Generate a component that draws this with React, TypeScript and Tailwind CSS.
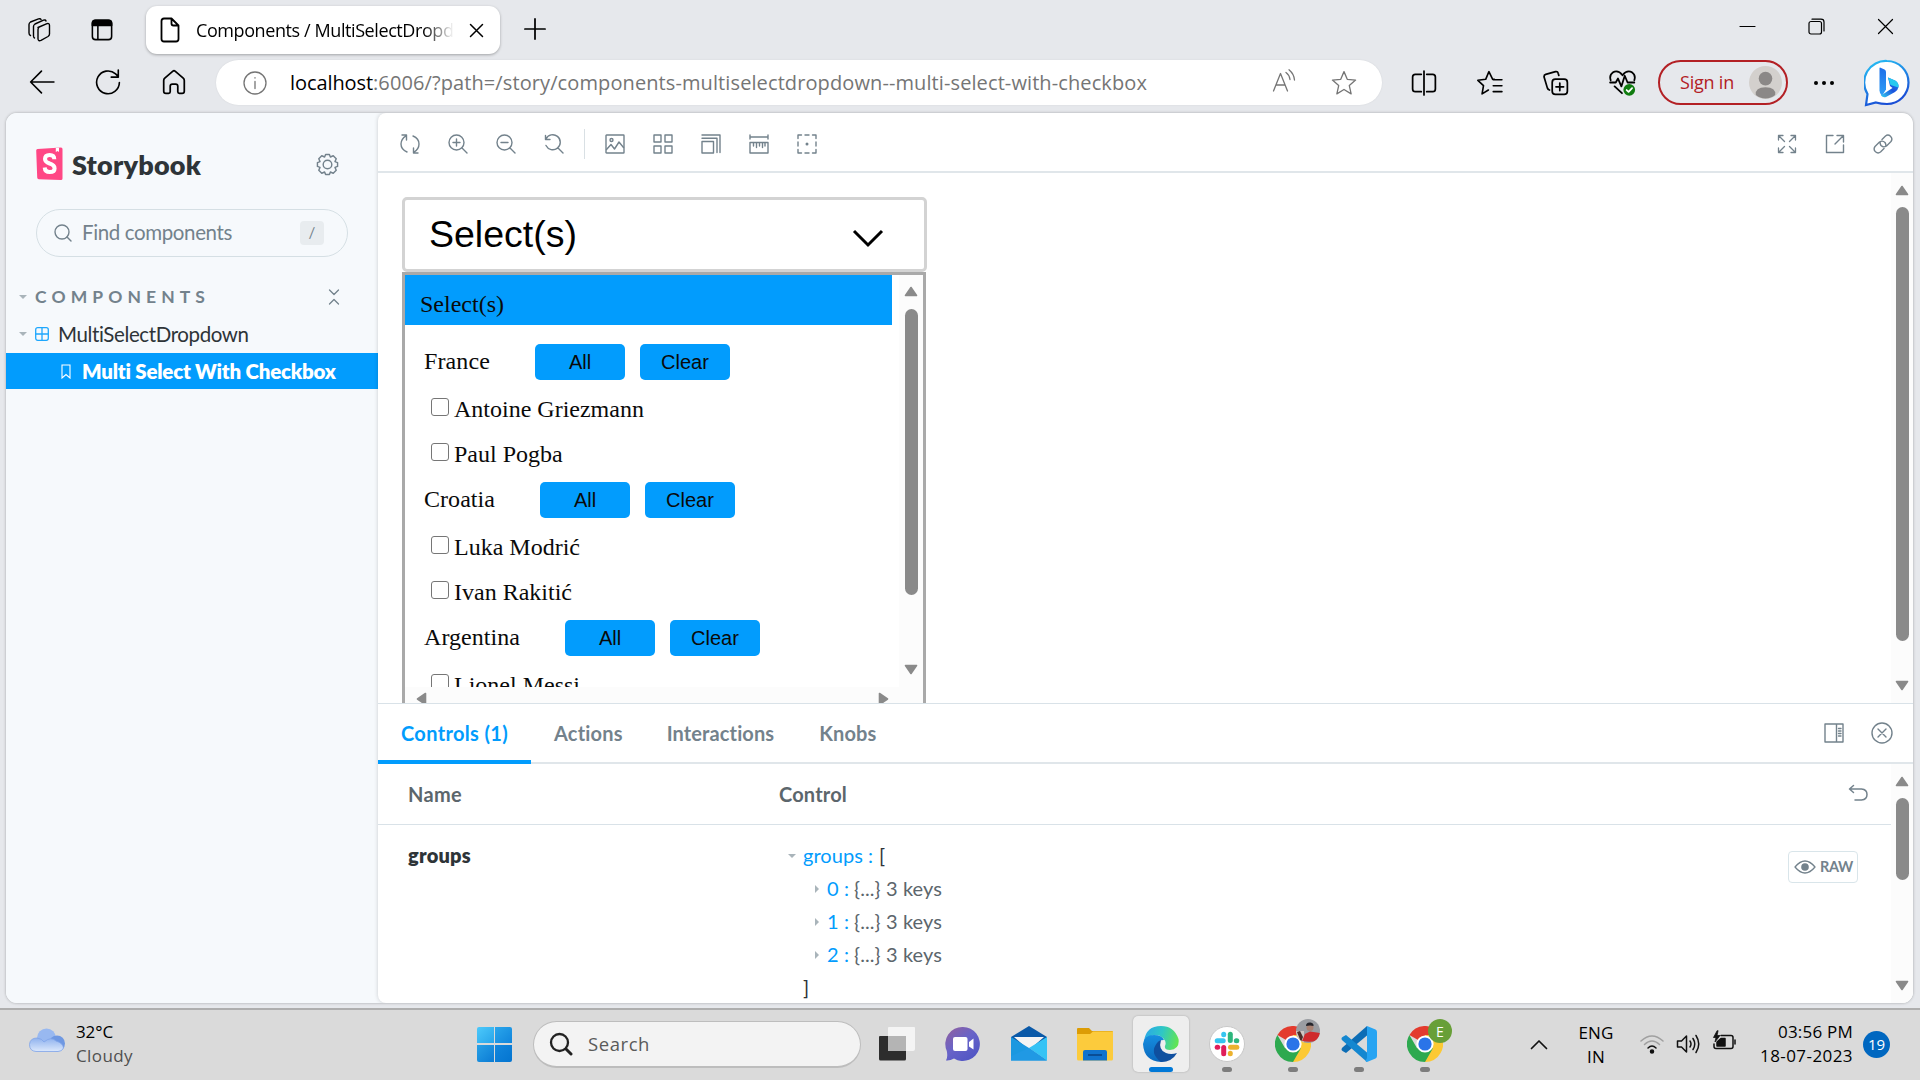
import React, { useLayoutEffect, useRef, useState } from "react";

/* Text run whose tracking is derived from its measured width. */
function T({ w, className = "", children }: { w?: number; className?: string; children: string }) {
  const ref = useRef<HTMLSpanElement>(null);
  const [spacing, setSpacing] = useState(0);
  useLayoutEffect(() => {
    if (ref.current && w) {
      const natural = ref.current.getBoundingClientRect().width;
      setSpacing((w - natural) / children.length);
    }
  }, []);
  return (
    <span ref={ref} style={{ letterSpacing: spacing }} className={`inline-block shrink-0 whitespace-pre ${className}`}>
      {children}
    </span>
  );
}

type IconProps = { className?: string; box?: string; sw?: number; children: React.ReactNode };
function Icon({ className = "size-6", box = "0 0 24 24", sw = 1.5, children }: IconProps) {
  return (
    <svg viewBox={box} className={`block shrink-0 ${className}`} fill="none" stroke="currentColor" strokeWidth={sw} strokeLinecap="round" strokeLinejoin="round">
      {children}
    </svg>
  );
}

function Arrow({ dir }: { dir: "up" | "down" | "left" | "right" }) {
  const d = {
    up: "M7 1.5L12.5 9.5H1.5Z",
    down: "M7 9.5L12.5 1.5H1.5Z",
    left: "M1.5 7L9.5 1.5V12.5Z",
    right: "M9.5 7L1.5 1.5V12.5Z",
  }[dir];
  const vertical = dir === "up" || dir === "down";
  return (
    <svg viewBox={vertical ? "0 0 14 11" : "0 0 11 14"} className={vertical ? "block h-[11px] w-[14px] shrink-0" : "block h-[14px] w-[11px] shrink-0"}>
      <path d={d} fill="#8a8a8a" stroke="#8a8a8a" strokeWidth="1.6" strokeLinejoin="round" />
    </svg>
  );
}

/* ---------- Browser chrome ---------- */

function TabStrip() {
  return (
    <div className="flex h-[60px] items-start">
      <div className="flex h-[60px] w-[146px] items-center pl-[27px]">
        <Icon className="h-6 w-[25px]" sw={1.4}>
          <path d="M10.500 9.500L19.500 5.700Q22 5 22 7.500V16Q22 17.500 20.500 18.500L13.500 22.300Q10.800 23.500 10.500 21V11.500Q10.500 10 12 9Z" />
          <path d="M7 20Q6 19.500 6 18V8.500Q6 7 7.500 6L16 2.200Q18 1.400 18.500 3" />
          <path d="M3 17.500Q1.500 17 1.500 15V6.500Q1.500 5 3 4L11 .9Q13 .3 13.500 1.600" />
        </Icon>
        <Icon className="ml-[39px] size-[22px]" sw={1.7}>
          <rect x="1.500" y="1.500" width="21" height="21" rx="3.500" />
          <path d="M1.500 7V5Q1.500 1.500 5 1.500H19Q22.500 1.500 22.500 5V7Z" fill="currentColor" />
          <path d="M7.500 7V22" />
        </Icon>
      </div>
      <div className="mt-1.5 flex h-12 w-[354px] items-center rounded-[11px] bg-white pl-[14px] shadow-[0_1px_3px_rgba(0,0,0,0.3)]">
        <Icon className="h-[26px] w-5" box="0 0 20 26" sw={1.8}>
          <path d="M4 1.500H11.500L18.500 8.500V22Q18.500 24.500 16 24.500H4Q1.500 24.500 1.500 22V4Q1.500 1.500 4 1.500ZM11.500 1.500V6.500Q11.500 8.500 13.500 8.500H18.500" />
        </Icon>
        <div className="ml-4 w-[258px] overflow-hidden pb-px text-[18px] leading-6 [mask-image:linear-gradient(90deg,#000_88%,transparent)]">
          <T w={268}>Components / MultiSelectDropdo</T>
        </div>
        <Icon className="ml-[15px] size-[15px]" box="0 0 15 15">
          <path d="M1.500 1.500L13.500 13.500M13.500 1.500L1.500 13.500" />
        </Icon>
      </div>
      <div className="flex h-[58px] flex-1 items-center pl-6">
        <Icon className="size-[22px]" sw={1.9}>
          <path d="M12 1V23M1 12H23" />
        </Icon>
      </div>
      <div className="flex h-[52px] items-center pr-[26px]">
        <Icon className="size-[17px]" box="0 0 17 17" sw={1.2}><path d="M1 8.500H16" /></Icon>
        <Icon className="ml-[52px] size-[17px]" box="0 0 17 17" sw={1.2}>
          <rect x="1" y="3.500" width="12.500" height="12.500" rx="2" />
          <path d="M4 1.200H13Q16 1.200 16 4V13" />
        </Icon>
        <Icon className="ml-[52px] size-[17px]" box="0 0 17 17" sw={1.2}><path d="M1.500 1.500L15.500 15.500M15.500 1.500L1.500 15.500" /></Icon>
      </div>
    </div>
  );
}

function BingLogo() {
  return (
    <svg viewBox="0 0 46 48" className="ml-[29px] block h-12 w-[46px] shrink-0">
      <defs>
        <linearGradient id="bubble" x1="0" y1="0" x2=".4" y2="1">
          <stop offset="0" stopColor="#27c4f5" /><stop offset="1" stopColor="#1a4fd6" />
        </linearGradient>
        <linearGradient id="stem" x1="0" y1="0" x2="0" y2="1">
          <stop offset="0" stopColor="#1f6fe8" /><stop offset="1" stopColor="#2fa0f7" />
        </linearGradient>
        <linearGradient id="bowl" x1="1" y1="0" x2="0" y2="1">
          <stop offset="0" stopColor="#1a86ee" /><stop offset=".5" stopColor="#1a53dd" /><stop offset="1" stopColor="#35d0f0" />
        </linearGradient>
      </defs>
      <path d="M23 2A21.500 21.500 0 1 1 23 45Q17 45 12 43.500L2 46L3.500 35A21.500 21.500 0 0 1 23 2Z" fill="#fff" stroke="url(#bubble)" strokeWidth="2.200" />
      <path d="M16 8.500L20.500 10.500Q22 11.300 22 13V30.500L18 37Q15.500 34.500 15.500 31.500V9Z" fill="url(#stem)" />
      <path d="M24 18.500L31 21.500Q35 23.500 34.500 28Q34 31 31 33L22 38Q19 39 17 36.500L28.500 29L26 27Z" fill="url(#bowl)" />
      <path d="M24 18.500L31 21.500Q35 23.500 34.500 28.500L26.500 26Z" fill="#27c9ef" />
    </svg>
  );
}

function AddressRow() {
  return (
    <div className="flex h-[53px] items-start">
      <div className="flex h-[44px] w-[216px] items-center pl-[29px]">
        <Icon className="size-[26px]" sw={1.5}><path d="M23 12H1.500M11.500 2L1.500 12L11.500 22" /></Icon>
        <Icon className="ml-10 size-[26px]" sw={1.5}><path d="M22.500 12.500A10.500 10.500 0 1 1 19 4.500L21.500 7M21.500 1V7.500H15" /></Icon>
        <Icon className="ml-10 size-[26px]" sw={1.6}><path d="M2.500 10.500Q2.500 9.500 3.500 8.500L11 2Q12 1.200 13 2L20.500 8.500Q21.500 9.500 21.500 10.500V20.500Q21.500 22.500 19.500 22.500H17Q15.500 22.500 15.500 21V16Q15.500 14 13.500 14H10.500Q8.500 14 8.500 16V21Q8.500 22.500 7 22.500H4.500Q2.500 22.500 2.500 20.500Z" /></Icon>
      </div>
      <div className="flex h-[45px] w-[1166px] items-center rounded-full bg-white pl-[27px] text-[#757575] shadow-[0_0_2px_rgba(0,0,0,0.08)]">
        <Icon className="size-6" sw={1.3}><circle cx="12" cy="12" r="11" /><path d="M12 10.500V17.500M12 6.700V7" /></Icon>
        <div className="ml-[23px] flex flex-1 text-[20px] leading-7">
          <T w={83} className="text-black">localhost</T>
          <T w={774}>:6006/?path=/story/components-multiselectdropdown--multi-select-with-checkbox</T>
        </div>
        <Icon className="-mt-1 size-6" sw={1.3}><path d="M1.500 22L8.500 4.500L15.500 22M4 16H13M14 3.500Q17.500 6 18 10.500M17 .8Q22 5 22.500 11" /></Icon>
        <Icon className="mr-[25px] ml-[35px] size-[26px]" sw={1.2}><path d="M12 1.500L15 8.600L22.700 9.300L16.900 14.400L18.600 22L12 18L5.400 22L7.100 14.400L1.300 9.300L9 8.600Z" /></Icon>
      </div>
      <div className="flex h-[45px] items-center pl-[29px]">
        <Icon className="size-[26px]" sw={1.6}><path d="M9.500 4H4Q1.500 4 1.500 6.500V17.500Q1.500 20 4 20H9.500M14.500 4H20Q22.500 4 22.500 6.500V17.500Q22.500 20 20 20H14.500M12 1V23" /></Icon>
        <Icon className="ml-10 size-[26px]" sw={1.5}><path d="M16 8.700H14.500L11 1.500L8 8.600L.8 9.500L6 14.500L4.700 22L10.500 18.500M15 9H23M15 14.500H23M15 20H23" /></Icon>
        <Icon className="ml-10 size-[26px]" sw={1.6}>
          <rect x="8.500" y="8.500" width="14" height="14" rx="3" />
          <path d="M15.500 12V19M12 15.500H19M6 18.500Q4.500 18 4 16.500L1 6.500Q.7 4.500 2.500 4L11.500 1.500Q13.500 1 14 3L14.600 5" />
        </Icon>
        <Icon className="ml-10 size-[27px]" sw={1.6}>
          <path d="M1.500 10Q0 5.500 3.500 3Q8 .5 12 5.500Q16 .5 20.500 3Q24 5.500 22.500 10M1 12H6L8 8.500L11 15.500L14 6L16.500 12H22.500M5 15.500L11.500 21.500" />
          <circle cx="18" cy="18.500" r="5.200" fill="#107c10" stroke="none" />
          <path d="M15.700 18.700L17.400 20.300L20.500 17" stroke="#fff" />
        </Icon>
        <div className="ml-[22px] flex h-[45px] w-[130px] items-center justify-between rounded-full border-2 border-[#b32025] pr-[4px] pl-5 text-[18px] text-[#b32025]">
          <T w={54}>Sign in</T>
          <svg viewBox="0 0 34 34" className="block size-[33px]">
            <circle cx="17" cy="17" r="17" fill="#d3d0cd" />
            <circle cx="17" cy="13" r="7" fill="#8b8887" />
            <path d="M7 30Q6 22 17 22Q28 22 27 30Q23 33.500 17 33.500Q11 33.500 7 30Z" fill="#8b8887" />
          </svg>
        </div>
        <svg viewBox="0 0 22 6" className="ml-[25px] block h-1.5 w-[22px]"><circle cx="3" cy="3" r="2" /><circle cx="11" cy="3" r="2" /><circle cx="19" cy="3" r="2" /></svg>
        <BingLogo />
      </div>
    </div>
  );
}

/* ---------- Storybook sidebar ---------- */

function Caret({ className = "" }: { className?: string }) {
  return <svg viewBox="0 0 8 4" className={`block h-1 w-2 shrink-0 ${className}`}><path d="M0 0H8L4 4Z" fill="#a9b4ba" /></svg>;
}

function Sidebar() {
  return (
    <aside className="flex w-[372px] shrink-0 flex-col bg-[#f6f9fc] text-[#2e3438]">
      <div className="mt-[30px] flex h-[42px] items-center pl-[30px]">
        <svg viewBox="0 0 27 34" className="block h-[34px] w-[27px] shrink-0">
          <path d="M1.500 2L25 .500Q26.500 .5 26.500 2V31.500Q26.500 33.200 24.800 33.100L2.800 32.200Q1.300 32 1.200 30.500L.2 3.500Q.2 2.200 1.500 2Z" fill="#ff4785" />
          <path d="M19.800 .9L23 .7V5L21.500 3.900L19.800 5Z" fill="#fff" />
          <path d="M18.300 12.200Q18.300 8 13.600 8Q9 8 9 12Q9 15 13.600 16.500Q18.600 18 18.600 21.500Q18.600 25 13.800 25Q9 25 8.700 20.500" fill="none" stroke="#fff" strokeWidth="4" />
        </svg>
        <T w={129} className="ml-[9px] pt-0.5 text-[27px] font-extrabold">Storybook</T>
        <Icon className="ml-[115px] size-[23px] text-[#73828c]" box="0 0 24 24" sw={1.5}>
          <path d="M10 1.500H14L15 4.200L18 2.900L21.100 6L19.800 9L22.500 10V14L19.800 15L21.100 18L18 21.100L15 19.800L14 22.500H10L9 19.800L6 21.100L2.900 18L4.200 15L1.500 14V10L4.200 9L2.900 6L6 2.900L9 4.200Z" />
          <circle cx="12" cy="12" r="4.500" />
        </Icon>
      </div>
      <div className="mt-6 ml-[30px] flex h-12 w-[312px] items-center rounded-full border border-[#d5dfe4] pb-px pl-[17px] text-[20.500px] text-[#73828c]">
        <Icon className="size-[18px]" box="0 0 18 18" sw={1.4}><circle cx="8" cy="8" r="7" /><path d="M13 13L17 17" /></Icon>
        <T w={150} className="ml-[10px]">Find components</T>
        <span className="ml-[68px] flex size-6 items-center justify-center rounded-[4px] bg-[#e8ecef] text-[15px]">/</span>
      </div>
      <div className="mt-[21px] flex h-[38px] items-center pl-[13px] text-[#73828c]">
        <Caret />
        <T w={175} className="ml-[8px] text-[17.500px] font-bold">COMPONENTS</T>
        <Icon className="ml-[118px] h-4 w-3" box="0 0 12 16" sw={1.3}><path d="M1.500 1L6 5.500L10.500 1M1.500 15L6 10.500L10.500 15" /></Icon>
      </div>
      <div className="flex h-9 items-center pl-[13px]">
        <Caret />
        <Icon className="ml-[8px] size-[14px] text-[#1ea7fd]" box="0 0 14 14" sw={1.3}><rect x=".7" y=".7" width="12.600" height="12.600" rx="2" /><path d="M7 1V13M1 7H13" /></Icon>
        <T w={191} className="ml-[9px] text-[20.500px]">MultiSelectDropdown</T>
      </div>
      <div className="mt-px flex h-9 items-center bg-[#029cfd] pl-[55px] text-white">
        <Icon className="h-[15px] w-[10px]" box="0 0 10 15" sw={1.1}><path d="M1 1H9V14L5 10.500L1 14Z" strokeLinejoin="miter" /></Icon>
        <T w={254} className="ml-[11px] text-[20.500px] font-extrabold">Multi Select With Checkbox</T>
      </div>
    </aside>
  );
}

/* ---------- Storybook main ---------- */

function StoryToolbar() {
  const cls = "size-5";
  return (
    <div className="flex h-[60px] shrink-0 items-center border-b-2 border-[#e0e6ea] pt-[3px] pr-5 pl-[22px] text-[#73828c]">
      <div className="flex items-center gap-7">
        <Icon className={cls} box="0 0 20 20" sw={1.4}><path d="M7 18Q1 15.500 1 10Q1 5 6 1.800M2 1H6.500V6M13 2Q19 4.500 19 10Q19 15 14 18.200M18 19H13.500V14" /></Icon>
        <Icon className={cls} box="0 0 20 20" sw={1.4}><circle cx="8.500" cy="8.500" r="7.500" /><path d="M14 14L19 19M5 8.500H12M8.500 5V12" /></Icon>
        <Icon className={cls} box="0 0 20 20" sw={1.4}><circle cx="8.500" cy="8.500" r="7.500" /><path d="M14 14L19 19M5 8.500H12" /></Icon>
        <Icon className={cls} box="0 0 20 20" sw={1.4}><path d="M2 5A7.500 7.500 0 1 1 2 11.500M1.500 1.500V5.500H6M14 14L19 19" /></Icon>
      </div>
      <div className="ml-[20px] h-[30px] w-px bg-[#d9e0e4]" />
      <div className="ml-5 flex items-center gap-7">
        <Icon className={cls} box="0 0 20 20" sw={1.4}><rect x="1" y="1" width="18" height="18" rx=".5" /><circle cx="6.500" cy="6" r="1.500" /><path d="M1.500 15.500L6 10.500L9.500 15L14 8L18.500 13.500" /></Icon>
        <Icon className={cls} box="0 0 20 20" sw={1.4}><path d="M1 1H8V8H1ZM12 1H19V8H12ZM1 12H8V19H1ZM12 12H19V19H12Z" /></Icon>
        <Icon className={cls} box="0 0 20 20" sw={1.4}><path d="M1 7.500H12.500V19H1ZM1 4.200H16V18.500M1 1H19V18.500" /></Icon>
        <Icon className={cls} box="0 0 20 20" sw={1.4}><path d="M1 1V5M19 1V5M1 3H19M1 8.500H19V19H1ZM4.500 9V12M7.500 9V13.500M10.500 9V12M13.500 9V13.500M16 9V12" /></Icon>
        <Icon className={cls} box="0 0 20 20" sw={1.4}><path d="M1 4.500V1H4.500M8 1H12M15.500 1H19V4.500M19 8V12M19 15.500V19H15.500M12 19H8M4.500 19H1V15.500M1 12V8" /><circle cx="10" cy="10" r=".8" fill="currentColor" /></Icon>
      </div>
      <div className="ml-auto flex items-center gap-7">
        <Icon className={cls} box="0 0 20 20" sw={1.3}><path d="M1.500 6V1.500H6M2 2L7.500 7.500M14 1.500H18.500V6M18 2L12.500 7.500M18.500 14V18.500H14M18 18L12.500 12.500M6 18.500H1.500V14M2 18L7.500 12.500" /></Icon>
        <Icon className={cls} box="0 0 20 20" sw={1.4}><path d="M8 1.500H1.500V18.500H18.500V11M12 1.500H18.500V8M18 2L10 10" /></Icon>
        <Icon className={cls} box="0 0 20 20" sw={1.4}><path d="M9 5.500L12.500 2Q15 0 17.500 2.200Q20 4.700 18 7.500L13.500 12Q10.500 14 8 11.500Q7 10 7.200 8.500M11 14.500L7.500 18Q5 20 2.500 17.800Q0 15.300 2 12.500L6.500 8Q9.500 6 12 8.500Q13 10 12.800 11.500" /></Icon>
      </div>
    </div>
  );
}

const teams = [
  { name: "France", w: 66, players: ["Antoine Griezmann", "Paul Pogba"] },
  { name: "Croatia", w: 71, players: ["Luka Modrić", "Ivan Rakitić"] },
  { name: "Argentina", w: 96, players: ["Lionel Messi"] },
];

function Preview() {
  return (
    <div className="flex min-h-0 flex-1 overflow-hidden">
      <div className="flex-1 pt-6 pl-6">
        <div className="flex h-[75px] w-[525px] items-center justify-between rounded-[5px] border-[3px] border-[#d3d3d3] pr-[40px] pl-[24px] font-['Liberation_Sans',sans-serif] text-[37.500px] leading-none text-black">
          <span>Select(s)</span>
          <Icon className="mt-[7px] h-5 w-8" box="0 0 32 20" sw={3}><path d="M2 3L16 17L30 3" strokeLinecap="butt" strokeLinejoin="miter" /></Icon>
        </div>
        <div className="flex h-[470px] w-[524px] border-[3px] border-[#a9a9a9]">
          <div className="flex w-[494px] shrink-0 flex-col font-['Liberation_Serif',serif] text-[24px] leading-none text-[#0a0a0a]">
            <div className="h-[412px] shrink-0 overflow-hidden">
              <div className="flex h-[50px] w-[487px] items-center bg-[#029cfd] pt-2 pl-[15px]">Select(s)</div>
              <div className="mt-[19px]">
                {teams.map((t) => (
                  <div key={t.name} className="flex h-[138px] flex-col">
                    <div className="flex h-9 items-center pl-[19px]">
                      <T w={t.w} className="-mt-0.5">{t.name}</T>
                      <span className="ml-[45px] flex h-9 w-[90px] items-center justify-center rounded-[5px] bg-[#029cfd] font-['Liberation_Sans',sans-serif] text-[20px]">All</span>
                      <span className="ml-[15px] flex h-9 w-[90px] items-center justify-center rounded-[5px] bg-[#029cfd] font-['Liberation_Sans',sans-serif] text-[20px]">Clear</span>
                    </div>
                    <div className="mt-[6px]">
                      {t.players.map((p) => (
                        <div key={p} className="flex h-[45px] items-center pl-[26px]">
                          <span className="-mt-1 mr-[5px] size-[18px] shrink-0 rounded-[3px] border-[1.500px] border-[#767676] bg-white" />
                          <span>{p}</span>
                        </div>
                      ))}
                    </div>
                  </div>
                ))}
              </div>
            </div>
            <div className="flex h-[52px] items-start justify-between bg-[#fcfcfc] pt-[5px] pr-[10px] pl-[11px]">
              <Arrow dir="left" />
              <Arrow dir="right" />
            </div>
          </div>
          <div className="flex flex-1 flex-col items-center bg-[#fcfcfc] pt-[11px]">
            <Arrow dir="up" />
            <div className="mt-[12px] h-[286px] w-[13px] shrink-0 rounded-full bg-[#8a8a8a]" />
            <div className="mt-[69px]"><Arrow dir="down" /></div>
          </div>
        </div>
      </div>
      <div className="flex w-[22px] flex-col items-center bg-[#fcfcfc] pt-3">
        <Arrow dir="up" />
        <div className="mt-[11px] h-[434px] w-[13px] rounded-full bg-[#8a8a8a]" />
        <div className="mt-[39px]"><Arrow dir="down" /></div>
      </div>
    </div>
  );
}

function AddonPanel() {
  return (
    <div className="flex h-[300px] shrink-0 flex-col border-t border-[#d9e2e8] text-[20px] text-[#73828c]">
      <div className="flex h-[60px] shrink-0 border-b-2 border-[#e0e6ea] font-bold">
        <div className="-mb-0.5 flex w-[153px] items-center justify-center border-b-4 border-[#029cfd] pt-0.5 text-[#029cfd]"><T w={107}>Controls (1)</T></div>
        <div className="flex items-center pl-[23px]"><T w={69}>Actions</T></div>
        <div className="flex items-center pl-11"><T w={108}>Interactions</T></div>
        <div className="flex items-center pl-[45px]"><T w={57}>Knobs</T></div>
        <div className="ml-auto flex items-center gap-[27px] pr-5">
          <Icon className="size-5" box="0 0 20 20" sw={1.4}><path d="M1 1H19V19H1ZM12.500 1V19M14.500 5.500H17M14.500 8H17M14.500 10.500H17M14.500 13H17" /></Icon>
          <Icon className="size-[22px]" box="0 0 22 22" sw={1.4}><circle cx="11" cy="11" r="10" /><path d="M7 7L15 15M15 7L7 15" /></Icon>
        </div>
      </div>
      <div className="flex min-h-0 flex-1">
        <div className="min-w-0 flex-1">
          <div className="flex h-[61px] items-center border-b border-[#d9e2e8] pb-px pl-[30px] font-bold text-[#5c666c]">
            <T w={54}>Name</T>
            <T w={68} className="ml-[317px]">Control</T>
            <Icon className="mr-[23px] ml-auto size-5 text-[#73828c]" box="0 0 20 20" sw={1.5}><path d="M5.500 1.500L1.500 5L5.500 8.500M1.500 5H13.500Q19 5.500 19 10.500Q19 15.500 13.500 16H7" /></Icon>
          </div>
          <div className="flex items-start pl-[30px]">
            <T w={63} className="mt-4 font-extrabold leading-7 text-[#2e3438]">groups</T>
            <div className="mt-[14px] ml-[317px] text-[20px] leading-[33px] text-[#5c666c]">
              <div className="flex items-center">
                <Caret /><T w={70} className="ml-[7px] text-[#029cfd]">groups :</T><span className="ml-[6px] text-[#2e3438]">[</span>
              </div>
              {["0", "1", "2"].map((n) => (
                <div key={n} className="flex items-center pl-[27px]">
                  <svg viewBox="0 0 4 8" className="block h-2 w-1"><path d="M0 0V8L4 4Z" fill="#a9b4ba" /></svg>
                  <T w={22} className="ml-2 text-[#029cfd]">{n + " :"}</T>
                  <T w={88} className="ml-[5px]">{"{...} 3 keys"}</T>
                </div>
              ))}
              <div className="pl-[15px] text-[#2e3438]">]</div>
            </div>
            <div className="mt-[26px] mr-[33px] ml-auto flex h-8 w-[70px] items-center rounded-[4px] border border-[#d9e5ea] pl-[5px] text-[14.500px] font-bold">
              <Icon className="h-[14px] w-[22px]" box="0 0 22 14" sw={1.3}><path d="M1 7Q11 -5 21 7Q11 19 1 7Z" /><circle cx="11" cy="7" r="3.800" fill="currentColor" stroke="none" /></Icon>
              <T w={33} className="ml-1">RAW</T>
            </div>
          </div>
        </div>
        <div className="flex w-[22px] flex-col items-center bg-[#fcfcfc] pt-3">
          <Arrow dir="up" />
          <div className="mt-[11px] h-[82px] w-[13px] shrink-0 rounded-full bg-[#8a8a8a]" />
          <div className="mt-[100px]"><Arrow dir="down" /></div>
        </div>
      </div>
    </div>
  );
}

/* ---------- Taskbar ---------- */

function Chrome() {
  return (
    <svg viewBox="0 0 36 36" className="block size-9">
      <path d="M18 18L2.400 9A18 18 0 0 1 33.600 9Z" fill="#e33b2e" />
      <path d="M18 18V36A18 18 0 0 0 33.600 9H18Z" fill="#fcc934" />
      <path d="M18 18L25.800 22.500L18 36A18 18 0 0 1 2.400 9L10.200 22.500Z" fill="#2da94f" />
      <circle cx="18" cy="18" r="8.600" fill="#fff" />
      <circle cx="18" cy="18" r="6.600" fill="#2a74e8" />
    </svg>
  );
}

function TaskItem({ children, run, active }: { children: React.ReactNode; run?: boolean; active?: boolean }) {
  return (
    <div className={`relative mx-[5px] flex h-14 w-14 justify-center rounded-[5px] pt-2.5 ${active ? "bg-[#eeeeee] shadow-[0_0_2px_rgba(0,0,0,0.25)]" : ""}`}>
      {children}
      {run && <span className="absolute bottom-0 left-[23px] h-[5px] w-[10px] rounded-full bg-[#7d7d7d]" />}
      {active && <span className="absolute bottom-0 left-4 h-[5px] w-6 rounded-full bg-[#0078d7]" />}
    </div>
  );
}

function TaskApps() {
  return (
    <div className="flex">
      <TaskItem>
        <svg viewBox="0 0 36 36" className="block size-9">
          <path d="M1 10H27V33Q27 34.500 25.500 34.500H1.500Q0 34.500 0 33V11Q0 10 1 10Z" fill="#2d2d2d" />
          <path d="M10 1H35Q36 1 36 2V23Q36 25 34 25H9V2Q9 1 10 1Z" fill="#f4f4f4" />
          <path d="M9 10H27V25H9Z" fill="#b4b4b4" />
        </svg>
      </TaskItem>
      <TaskItem>
        <svg viewBox="0 0 36 36" className="block size-9">
          <defs><linearGradient id="chat" x1="0" y1="0" x2=".8" y2="1"><stop stopColor="#94609c" /><stop offset=".5" stopColor="#6863c8" /><stop offset="1" stopColor="#4f55c4" /></linearGradient></defs>
          <path d="M18 1A17 17 0 1 1 9 32.500Q5 35 1 34.500Q3 31 1.800 25A17 17 0 0 1 18 1Z" fill="url(#chat)" />
          <rect x="8" y="11" width="14.500" height="14" rx="2" fill="#fff" /><path d="M24 16L28.500 12.500V23.500L24 20.500Z" fill="#fff" />
        </svg>
      </TaskItem>
      <TaskItem>
        <svg viewBox="0 0 36 36" className="block size-9">
          <path d="M0 11L18 0L36 11V20H0Z" fill="#0a59a8" /><path d="M3 11H33L18 24Z" fill="#f4f4f4" />
          <path d="M0 11L18 22L36 34.500H0Z" fill="#1b98e0" /><path d="M36 11V34.500L18 22Z" fill="#35c3f5" /><path d="M0 34.500V30L18 22L36 34.500Z" fill="#2099e4" />
        </svg>
      </TaskItem>
      <TaskItem>
        <svg viewBox="0 0 36 36" className="block size-9">
          <path d="M0 3Q0 2 1 2H12L15 5H35Q36 5 36 6V12H0Z" fill="#dc9c05" /><path d="M0 8H13L16 5.500H36V33Q36 34.500 34.500 34.500H1.500Q0 34.500 0 33Z" fill="#fccb3c" />
          <path d="M6 34.500V26Q6 24 8 24H28Q30 24 30 26V34.500Z" fill="#1173cd" /><path d="M11 29H25" stroke="#0a4d95" strokeWidth="2" />
        </svg>
      </TaskItem>
      <TaskItem active>
        <svg viewBox="0 0 36 36" className="block size-9">
          <defs>
            <linearGradient id="eg" x1="0" y1=".3" x2="1" y2=".5"><stop stopColor="#2aa8e8" /><stop offset=".5" stopColor="#2fc7c5" /><stop offset="1" stopColor="#62e552" /></linearGradient>
            <linearGradient id="eb" x1="0" y1="0" x2="0" y2="1"><stop stopColor="#168ee0" /><stop offset="1" stopColor="#0b68bd" /></linearGradient>
          </defs>
          <path d="M1 15Q3 0 18 0Q31 0 35.500 13Q37 23 27 24Q21 24 22 20Q24 16 20 12Q12 5 1 15Z" fill="url(#eg)" />
          <path d="M0 18Q1 9 11 9Q19 9 21 14Q15 14 14 19Q13 30 26 33Q22 36 18 36Q1 35 0 18Z" fill="url(#eb)" />
          <path d="M14 17Q6 27 18 36Q29 36 34 27Q28 29 23 27Q15 24 18 14Q15 15 14 17Z" fill="#0f4f9f" />
        </svg>
      </TaskItem>
      <TaskItem run>
        <svg viewBox="0 0 36 36" className="block size-9">
          <circle cx="18" cy="18" r="17.500" fill="#fff" stroke="#c8c8c8" />
          <g strokeWidth="5" strokeLinecap="round">
            <path d="M8.200 14.700H14.200" stroke="#36c5f0" /><path d="M14.700 8.200V8.700" stroke="#36c5f0" />
            <path d="M21.300 8.200V14.500" stroke="#2eb67d" /><path d="M27.800 14.700H27.300" stroke="#2eb67d" />
            <path d="M21.500 21.300H27.800" stroke="#ecb22e" /><path d="M21.300 27.800V27.300" stroke="#ecb22e" />
            <path d="M14.700 21.500V27.800" stroke="#e01e5a" /><path d="M8.200 21.300H8.700" stroke="#e01e5a" />
          </g>
        </svg>
      </TaskItem>
      <TaskItem run>
        <Chrome />
        <svg viewBox="0 0 24 24" className="absolute top-[3px] left-[31px] block size-6">
          <defs><clipPath id="face"><circle cx="12" cy="12" r="12" /></clipPath></defs>
          <g clipPath="url(#face)">
            <rect width="24" height="24" fill="#9a9da2" /><rect y="12" width="8" height="12" fill="#cfc8c4" />
            <path d="M6 22L9 15L14 12.500L24 14V21Q16 24 6 22Z" fill="#cf2b2d" /><circle cx="14" cy="8.500" r="3.500" fill="#a98273" />
            <path d="M10 7Q10 3 14.500 3.500Q18 4 17.500 7L14 6.500Z" fill="#26262c" /><path d="M1 13L4 12L7 18L5 23Z" fill="#4a302b" />
          </g>
        </svg>
      </TaskItem>
      <TaskItem run>
        <svg viewBox="0 0 36 36" className="block size-9">
          <path d="M26 0V9.500L5 27L1.500 25Q-.5 23.500 1.500 21.500Z" fill="#0c6db5" />
          <path d="M26 36V26.500L5 9L1.500 11Q-.5 12.500 1.500 14.500Z" fill="#1487d0" />
          <path d="M26 0L34.500 3.500Q36 4.300 36 6V30Q36 31.700 34.500 32.500L26 36Q25 36 24.500 35L26 32Z" fill="#27a4f2" />
        </svg>
      </TaskItem>
      <TaskItem run>
        <Chrome />
        <span className="absolute top-[3px] left-[31px] flex size-6 items-center justify-center rounded-full bg-[#689f38] text-[14px] text-white">E</span>
      </TaskItem>
    </div>
  );
}

function Taskbar() {
  return (
    <div className="flex h-[72px] items-center border-t-2 border-[#aeaeae] bg-[#dadada] pb-0.5">
      <div className="flex w-[477px] items-center pl-[29px]">
        <svg viewBox="0 0 36 24" className="mb-2 block h-6 w-9 shrink-0">
          <defs><linearGradient id="cl" x1="0" y1="0" x2="0" y2="1"><stop stopColor="#8fb2ee" /><stop offset="1" stopColor="#dbe8fc" /></linearGradient></defs>
          <circle cx="17.500" cy="10" r="9.500" fill="#98b8f0" />
          <circle cx="28" cy="15.500" r="8" fill="#6f98e2" />
          <path d="M7 23.500Q.5 23 .5 16.500Q1 10 8 10Q13 10.500 15 14Q22 8 27 13Q34 15 34.500 20Q33 23.500 29 23.500Z" fill="url(#cl)" stroke="#7fa3e8" strokeWidth=".8" />
        </svg>
        <div className="ml-[11px] flex flex-col items-start text-[17px] leading-6 text-black">
          <T w={37}>32°C</T>
          <T w={57} className="text-[#505050]">Cloudy</T>
        </div>
      </div>
      <div className="grid size-[35px] shrink-0 grid-cols-2 gap-[1.500px]">
        <span className="rounded-tl-[2px] bg-gradient-to-br from-[#4cc9fb] to-[#27a5ea]" /><span className="rounded-tr-[2px] bg-gradient-to-br from-[#2aa6eb] to-[#1085dc]" />
        <span className="rounded-bl-[2px] bg-gradient-to-br from-[#27a0e6] to-[#0a7bd4]" /><span className="rounded-br-[2px] bg-gradient-to-br from-[#1287dd] to-[#0474d0]" />
      </div>
      <div className="ml-[21px] flex h-[47px] w-[328px] items-center rounded-full border border-b-2 border-[#bdbdbd] bg-[#f3f3f3] pl-[15px] text-[18.500px] text-[#5a5a5a]">
        <Icon className="size-6 text-[#222]" sw={2.3}><circle cx="10.500" cy="10.500" r="8.500" /><path d="M17 17L22 22" strokeWidth="3" /></Icon>
        <T w={62} className="ml-[15px]">Search</T>
      </div>
      <div className="ml-[3px]"><TaskApps /></div>
      <Icon className="ml-[72px] h-[11px] w-[18px] text-[#111]" box="0 0 18 11" sw={1.7}><path d="M1.500 9.500L9 2L16.500 9.500" /></Icon>
      <div className="ml-[30px] flex w-[36px] flex-col items-center pt-0.5 text-[17px] leading-6 text-black"><T w={35}>ENG</T><T w={18}>IN</T></div>
      <div className="ml-[26px] flex items-center gap-3 text-[#111]">
        <Icon className="size-6" sw={1.5}><g stroke="#a0a0a0"><path d="M1 9Q12 -1 23 9" /><path d="M4.500 12.500Q12 5.500 19.500 12.500" /></g><path d="M8 16Q12 12 16 16" /><circle cx="12" cy="19.500" r="1.500" fill="currentColor" /></Icon>
        <Icon className="size-6" sw={1.5}><path d="M1.500 9H5.500L10.500 4V20L5.500 15H1.500ZM14 9Q16 12 14 15M17 6.500Q20.500 12 17 17.500M20 3.500Q25.500 12 20 20.500" /></Icon>
        <Icon className="-mt-1 size-6" sw={1.5}><path d="M9 5.500H19Q21 5.500 21 7.500V16.500Q21 18.500 19 18.500H4Q2 18.500 2 16.500V14M23 10V14" /><path d="M5 16V12L9 8.500H13V16Z" fill="currentColor" /><path d="M5 1L1.500 7.500H4L3 12L8 5.500H5L6 1Z" fill="currentColor" strokeWidth=".8" /></Icon>
      </div>
      <div className="ml-[23px] flex w-[94px] flex-col items-end text-[17px] leading-6 text-black"><T w={75}>03:56 PM</T><T w={93}>18-07-2023</T></div>
      <span className="ml-[10px] flex size-[27px] items-center justify-center rounded-full bg-[#0067c0] text-[15px] font-medium text-white">19</span>
    </div>
  );
}

export default function App() {
  return (
    <div className="flex h-[1080px] w-[1920px] flex-col overflow-hidden bg-[#e6e8ec] font-['Open_Sans',sans-serif] text-black">
      <TabStrip />
      <AddressRow />
      <div className="mb-[5px] ml-1.5 flex h-[890px] w-[1907px] shrink-0 overflow-hidden rounded-[11px] bg-[#f6f9fc] font-[Lato,sans-serif] shadow-[0_0_3px_rgba(0,0,0,0.3)]">
        <Sidebar />
        <main className="flex min-w-0 flex-1 flex-col overflow-hidden rounded-l-[8px] bg-white shadow-[0_0_4px_rgba(0,0,0,0.18)]">
          <StoryToolbar />
          <Preview />
          <AddonPanel />
        </main>
      </div>
      <Taskbar />
    </div>
  );
}
